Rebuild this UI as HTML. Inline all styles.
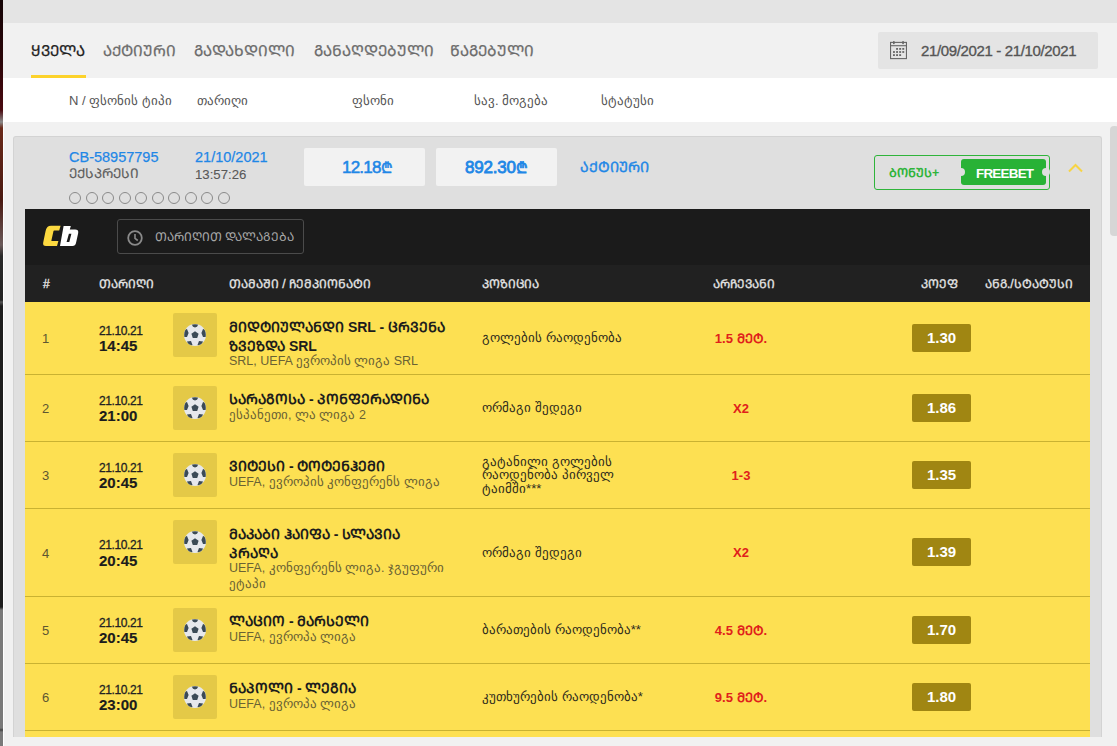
<!DOCTYPE html>
<html><head><meta charset="utf-8">
<style>
*{box-sizing:border-box;margin:0;padding:0}
html,body{width:1117px;height:746px;overflow:hidden}
body{position:relative;background:#f1f1f1;font-family:"Liberation Sans",sans-serif;color:#222}
.a{position:absolute;white-space:nowrap}
#strip{left:0;top:0;width:3px;height:746px;background:linear-gradient(#140406 0,#2a0508 60px,#4a0a10 110px,#8a8a8a 122px,#6a2a1a 128px,#4a1a12 200px,#6a5a5a 245px,#2a2a2a 256px,#222 300px,#555 302px,#1e1e1e 306px,#1e1e1e 607px,#7a7a7a 610px,#7a7a7a 728px,#444 730px,#7a7a7a 732px)}
#wline{left:3px;top:78px;width:1px;height:668px;background:#fff}
#topbar{left:3px;top:0;width:1114px;height:23px;background:#e4e4e4}
#tabbar{left:3px;top:23px;width:1114px;height:55px;background:#f1f1f1}
#hdr{left:3px;top:78px;width:1114px;height:44px;background:#fff}
.tab{top:37.6px;font-size:15.2px;line-height:26px;color:#6c6c6c;-webkit-text-stroke:0.25px #6c6c6c}
.tab.on{-webkit-text-stroke:0.25px #222}
.tab.on{color:#222}
#uline{left:31px;top:75px;width:55px;height:3px;background:#fcd22b}
.hc{top:92px;font-size:13px;line-height:18px;color:#555}
#daterange{left:878px;top:32px;width:220px;height:37px;background:#e4e4e4;border-radius:2px}
#dtxt{left:921px;top:41px;font-size:15px;letter-spacing:-0.36px;line-height:20px;color:#555;-webkit-text-stroke:0.35px #555}
#thumb{left:1110px;top:126px;width:9px;height:110px;background:#d6d6d6;border-radius:4px}
#card{left:13px;top:136px;width:1089px;height:601px;background:#dfdfdf;border-radius:3px 3px 0 0;border:1px solid #d3d3d3;border-bottom:none}

.blue{color:#1f87e6}
.ct{font-size:14.5px;line-height:15px}
.amt{top:148px;width:121px;height:38px;background:#f2f2f2;border-radius:2px}
.amtt{font-size:17px;line-height:17px;color:#1f87e6}
.circ{top:191.5px;width:12px;height:12px;border:1px solid #8a8a8a;border-radius:50%}
#bonus{left:874px;top:155px;width:176px;height:35px;border:1px solid #2fb43b;border-radius:3px}
#fb{left:961px;top:159px;width:85px;height:26px;background:#28b236;border-radius:3px}
.notch{width:8px;height:8px;border-radius:50%;background:#dfdfdf;top:9px}
#blk{left:25px;top:209px;width:1065px;height:56px;background:#1b1b1b}
#thead{left:25px;top:265px;width:1065px;height:37px;background:#212121}
#search{left:117px;top:219px;width:187px;height:35px;border:1px solid #4b4b4b;border-radius:3px}
.th{top:277px;font-size:12.1px;line-height:14px;color:#e6e6e6;-webkit-text-stroke:0.3px #e6e6e6}
</style><style>
.row{left:25px;width:1065px;background:#fde052}
.sep{left:25px;width:1065px;height:1px;background:#c9b232}
.num{font-size:13px;line-height:13px;color:#5e5631}
.dt{font-size:12px;line-height:12px;letter-spacing:-0.4px;color:#222;-webkit-text-stroke:0.3px #222}
.tm{font-size:15px;line-height:14px;color:#1c1c1c;font-weight:bold;-webkit-text-stroke:0.15px #1c1c1c}
.ib{left:173px;width:44px;height:44px;background:#e4c947;border-radius:2px}
.ttl{left:229px;font-size:14px;line-height:14px;font-weight:bold;color:#1c1c1c}
.sub{left:229px;font-size:12.5px;line-height:13px;color:#6a6234}
.pos{left:482px;font-size:13.2px;line-height:13.3px;color:#2e2b1c}
.ch{left:700px;width:82px;text-align:center;font-size:13px;line-height:13px;font-weight:bold;color:#e0201b}
.odb{left:912px;width:59px;height:28px;background:#a08612;border-radius:2px;color:#fff;font-weight:bold;font-size:15px;line-height:28px;text-align:center}
</style></head><body>
<div class="a" id="strip"></div>
<div class="a" id="topbar"></div>
<div class="a" id="tabbar"></div>
<div class="a" id="hdr"></div>
<div class="a" id="wline"></div>
<div class="a tab on" style="left: 31px; width: 56px; clip-path: inset(-12px -1px -12px -6px);">ᲧᲕᲔᲚᲐ</div>
<div class="a tab" style="left: 103px; width: 75px; clip-path: inset(-12px -1px -12px -6px);">ᲐᲥᲢᲘᲣᲠᲘ</div>
<div class="a tab" style="left: 194px; width: 103px; clip-path: inset(-12px -1px -12px -6px);">ᲒᲐᲓᲐᲮᲓᲘᲚᲘ</div>
<div class="a tab" style="left: 314px; width: 122px; clip-path: inset(-12px -1px -12px -6px);">ᲒᲐᲜᲐᲦᲓᲔᲑᲣᲚᲘ</div>
<div class="a tab" style="left: 450px; width: 86px; clip-path: inset(-12px -1px -12px -6px);">ᲬᲐᲒᲔᲑᲣᲚᲘ</div>
<div class="a" id="uline"></div>
<div class="a" id="daterange"></div>
<svg class="a" style="left:890px;top:41px" width="18" height="19" viewBox="0 0 18 19"><g fill="none" stroke="#666" stroke-width="1.1"><rect x="0.55" y="1.4" width="15.9" height="16.2"></rect><line x1="0.5" y1="4.7" x2="16.5" y2="4.7"></line></g><g fill="#666"><rect x="3" y="0" width="1.7" height="3.2" rx="0.8"></rect><rect x="12.2" y="0" width="1.7" height="3.2" rx="0.8"></rect><rect x="6.1" y="7" width="1.9" height="1.8"></rect><rect x="9.2" y="7" width="1.9" height="1.8"></rect><rect x="12.3" y="7" width="1.9" height="1.8"></rect><rect x="3" y="10.1" width="1.9" height="1.8"></rect><rect x="6.1" y="10.1" width="1.9" height="1.8"></rect><rect x="9.2" y="10.1" width="1.9" height="1.8"></rect><rect x="12.3" y="10.1" width="1.9" height="1.8"></rect><rect x="3" y="13.2" width="1.9" height="1.8"></rect><rect x="6.1" y="13.2" width="1.9" height="1.8"></rect><rect x="9.2" y="13.2" width="1.9" height="1.8"></rect></g></svg>
<div class="a" id="dtxt">21/09/2021 - 21/10/2021</div>
<div class="a hc" style="left: 69px; width: 105px; clip-path: inset(-12px -1px -12px -6px);">N / ფსონის ტიპი</div>
<div class="a hc" style="left: 197px; width: 53px; clip-path: inset(-12px -1px -12px -6px);">თარიღი</div>
<div class="a hc" style="left: 352px; width: 44px; clip-path: inset(-12px -1px -12px -6px);">ფსონი</div>
<div class="a hc" style="left: 474px; width: 77px; clip-path: inset(-12px -1px -12px -6px);">სავ. მოგება</div>
<div class="a hc" style="left: 601px; width: 55px; clip-path: inset(-12px -1px -12px -6px);">სტატუსი</div>
<div class="a" id="thumb"></div>
<div class="a" id="card"></div>

<div class="a ct blue" style="left:69px;top:150px;-webkit-text-stroke:0.25px #1f87e6">CB-58957795</div>
<div class="a ct" style="left: 69px; top: 166px; color: rgb(94, 94, 94); font-size: 13.5px; -webkit-text-stroke: 0.15px rgb(94, 94, 94); width: 72px; clip-path: inset(-12px -1px -12px -6px);">ᲔᲥᲡᲞᲠᲔᲡᲘ</div>
<div class="a ct blue" style="left:195px;top:150px;-webkit-text-stroke:0.25px #1f87e6">21/10/2021</div>
<div class="a ct" style="left:195px;top:166.5px;color:#595959;font-size:13.2px;-webkit-text-stroke:0.1px #595959">13:57:26</div>
<div class="a circ" style="left:69px"></div>
<div class="a circ" style="left:85.5px"></div>
<div class="a circ" style="left:102px"></div>
<div class="a circ" style="left:118.5px"></div>
<div class="a circ" style="left:135px"></div>
<div class="a circ" style="left:151.5px"></div>
<div class="a circ" style="left:168px"></div>
<div class="a circ" style="left:184.5px"></div>
<div class="a circ" style="left:201px"></div>
<div class="a circ" style="left:217.5px"></div>
<div class="a amt" style="left:304px"></div>
<div class="a amt" style="left:436px"></div>
<div class="a amtt" style="left:342px;top:159px;letter-spacing:-0.8px;-webkit-text-stroke:0.55px #1f87e6">12.18<span style="font-size:15px">₾</span></div>
<div class="a amtt" style="left:465px;top:159px;letter-spacing:-0.2px;-webkit-text-stroke:0.8px #1f87e6">892.30<span style="font-size:15px">₾</span></div>
<div class="a blue" style="left: 580px; top: 158.5px; font-size: 14.4px; line-height: 17px; -webkit-text-stroke: 0.4px rgb(31, 135, 230); width: 71px; clip-path: inset(-12px -1px -12px -6px);">ᲐᲥᲢᲘᲣᲠᲘ</div>
<div class="a" id="bonus"></div>
<div class="a" id="fb"><div class="a notch" style="left:-4px"></div><div class="a notch" style="left:81px"></div></div>
<div class="a" style="left: 889px; top: 165.5px; font-size: 12.4px; line-height: 15px; color: rgb(47, 180, 59); font-weight: bold; width: 53px; clip-path: inset(-12px -1px -12px -6px);">ᲑᲝᲜᲣᲡ+</div>
<div class="a" style="left:976px;top:165.5px;font-size:13.4px;line-height:15px;color:#fff;font-weight:bold;letter-spacing:-0.75px">FREEBET</div>
<svg class="a" style="left:1068px;top:163px" width="15" height="10" viewBox="0 0 15 10"><polyline points="1,8.5 7.5,2 14,8.5" fill="none" stroke="#f7d444" stroke-width="2"></polyline></svg>
<div class="a" id="blk"></div>
<div class="a" id="thead"></div>
<svg class="a" style="left:36px;top:220px" width="50" height="32" viewBox="0 0 50 32"><path fill="#fcd940" d="M15 5.8L24.6 5.8L23.2 10.5L18.2 10.5Q17.6 10.5 17.5 11L15.4 20.4Q15.3 21 16 21L22.4 21L21 26L10 26Q6.5 26 7.2 22.5L9.6 11Q10.6 5.8 15 5.8Z"></path><path fill="#fff" fill-rule="evenodd" d="M27.6 6L34.8 6L33.8 9.6L39 9.6Q42.8 9.6 42.2 13L40 23Q39.4 26 36.5 26L24 26ZM32.9 13.8L35.4 13.8L33.3 22L30.6 22Z"></path></svg>
<div class="a" id="search"></div>
<svg class="a" style="left:127px;top:230px" width="16" height="16" viewBox="0 0 16 16"><circle cx="8" cy="8" r="6.8" fill="none" stroke="#8a8a8a" stroke-width="1.8"></circle><polyline points="8,4 8,8.3 10.8,10.5" fill="none" stroke="#8a8a8a" stroke-width="1.6"></polyline></svg>
<div class="a" style="left: 155px; top: 230px; font-size: 12.2px; line-height: 15px; color: rgb(169, 169, 169); width: 142px; clip-path: inset(-12px -1px -12px -6px);">ᲗᲐᲠᲘᲦᲘᲗ ᲓᲐᲚᲐᲒᲔᲑᲐ</div>
<div class="a th" style="left:43px">#</div>
<div class="a th" style="left: 99px; width: 57px; clip-path: inset(-12px -1px -12px -6px);">ᲗᲐᲠᲘᲦᲘ</div>
<div class="a th" style="left: 229px; width: 145px; clip-path: inset(-12px -1px -12px -6px);">ᲗᲐᲛᲐᲨᲘ / ᲩᲔᲛᲞᲘᲝᲜᲐᲢᲘ</div>
<div class="a th" style="left: 482px; width: 59px; clip-path: inset(-12px -1px -12px -6px);">ᲞᲝᲖᲘᲪᲘᲐ</div>
<div class="a th" style="left: 713px; width: 64px; clip-path: inset(-12px -1px -12px -6px);">ᲐᲠᲩᲔᲕᲐᲜᲘ</div>
<div class="a th" style="left: 921px; width: 39px; clip-path: inset(-12px -1px -12px -6px);">ᲙᲝᲔᲤ</div>
<div class="a th" style="left: 985px; width: 90px; clip-path: inset(-12px -1px -12px -6px);">ᲐᲜᲒ./ᲡᲢᲐᲢᲣᲡᲘ</div>
<div class="a row" style="top:302px;height:72px"></div>
<div class="a sep" style="top:374px"></div>
<div class="a num" style="left:42px;top:332.0px">1</div>
<div class="a dt" style="left:99px;top:324.8px">21.10.21</div>
<div class="a tm" style="left:99px;top:339.1px">14:45</div>
<div class="a ib" style="top:313px"><svg class="a" style="left:11px;top:11px" width="22" height="22" viewBox="0 0 22 22"><defs><clipPath id="bc"><circle cx="11" cy="11" r="10.8"></circle></clipPath></defs><circle cx="11" cy="11" r="11" fill="#e6e8ec"></circle><g fill="#3b4a56" clip-path="url(#bc)"><polygon points="11,7.2 14.6,9.8 13.2,14 8.8,14 7.4,9.8"></polygon><polygon points="7.5,0 14.5,0 13,2.8 11,3.6 9,2.8"></polygon><polygon points="0,6 3,5 4.6,9 3,13 0,13"></polygon><polygon points="22,6 19,5 17.4,9 19,13 22,13"></polygon><polygon points="3,17.5 7,17 8.5,21 5,23"></polygon><polygon points="19,17.5 15,17 13.5,21 17,23"></polygon></g></svg></div>
<div class="a ttl" style="top: 320.1px; width: 219px; clip-path: inset(-12px -1px -12px -6px);">ᲛᲘᲓᲢᲘᲣᲚᲐᲜᲓᲘ SRL - ᲪᲠᲕᲔᲜᲐ</div>
<div class="a ttl" style="top: 338.6px; width: 90px; clip-path: inset(-12px -1px -12px -6px);">ᲖᲕᲔᲖᲓᲐ SRL</div>
<div class="a sub" style="top: 355.4px; width: 191px; clip-path: inset(-12px -1px -12px -6px);">SRL, UEFA ევროპის ლიგა SRL</div>
<div class="a pos" style="top: 331.4px; width: 142px; clip-path: inset(-12px -1px -12px -6px);">გოლების რაოდენობა</div>
<div class="a ch" style="top:331.5px">1.5 ᲛᲔᲢ.</div>
<div class="a odb" style="top:324px">1.30</div>
<div class="a row" style="top:375px;height:66px"></div>
<div class="a sep" style="top:441px"></div>
<div class="a num" style="left:42px;top:402.0px">2</div>
<div class="a dt" style="left:99px;top:394.8px">21.10.21</div>
<div class="a tm" style="left:99px;top:409.1px">21:00</div>
<div class="a ib" style="top:386px"><svg class="a" style="left:11px;top:11px" width="22" height="22" viewBox="0 0 22 22"><defs><clipPath id="bc"><circle cx="11" cy="11" r="10.8"></circle></clipPath></defs><circle cx="11" cy="11" r="11" fill="#e6e8ec"></circle><g fill="#3b4a56" clip-path="url(#bc)"><polygon points="11,7.2 14.6,9.8 13.2,14 8.8,14 7.4,9.8"></polygon><polygon points="7.5,0 14.5,0 13,2.8 11,3.6 9,2.8"></polygon><polygon points="0,6 3,5 4.6,9 3,13 0,13"></polygon><polygon points="22,6 19,5 17.4,9 19,13 22,13"></polygon><polygon points="3,17.5 7,17 8.5,21 5,23"></polygon><polygon points="19,17.5 15,17 13.5,21 17,23"></polygon></g></svg></div>
<div class="a ttl" style="top: 391.8px; width: 203px; clip-path: inset(-12px -1px -12px -6px);">ᲡᲐᲠᲐᲒᲝᲡᲐ - ᲞᲝᲜᲤᲔᲠᲐᲓᲘᲜᲐ</div>
<div class="a sub" style="top: 408.7px; width: 139px; clip-path: inset(-12px -1px -12px -6px);">ესპანეთი, ლა ლიგა 2</div>
<div class="a pos" style="top: 401.4px; width: 102px; clip-path: inset(-12px -1px -12px -6px);">ორმაგი შედეგი</div>
<div class="a ch" style="top:401.5px">X2</div>
<div class="a odb" style="top:394px">1.86</div>
<div class="a row" style="top:442px;height:66px"></div>
<div class="a sep" style="top:508px"></div>
<div class="a num" style="left:42px;top:469.0px">3</div>
<div class="a dt" style="left:99px;top:461.8px">21.10.21</div>
<div class="a tm" style="left:99px;top:476.1px">20:45</div>
<div class="a ib" style="top:453px"><svg class="a" style="left:11px;top:11px" width="22" height="22" viewBox="0 0 22 22"><defs><clipPath id="bc"><circle cx="11" cy="11" r="10.8"></circle></clipPath></defs><circle cx="11" cy="11" r="11" fill="#e6e8ec"></circle><g fill="#3b4a56" clip-path="url(#bc)"><polygon points="11,7.2 14.6,9.8 13.2,14 8.8,14 7.4,9.8"></polygon><polygon points="7.5,0 14.5,0 13,2.8 11,3.6 9,2.8"></polygon><polygon points="0,6 3,5 4.6,9 3,13 0,13"></polygon><polygon points="22,6 19,5 17.4,9 19,13 22,13"></polygon><polygon points="3,17.5 7,17 8.5,21 5,23"></polygon><polygon points="19,17.5 15,17 13.5,21 17,23"></polygon></g></svg></div>
<div class="a ttl" style="top: 458.8px; width: 159px; clip-path: inset(-12px -1px -12px -6px);">ᲕᲘᲢᲔᲡᲘ - ᲢᲝᲢᲔᲜᲰᲔᲛᲘ</div>
<div class="a sub" style="top: 475.7px; width: 213px; clip-path: inset(-12px -1px -12px -6px);">UEFA, ევროპის კონფერენს ლიგა</div>
<div class="a pos" style="top: 455.1px; width: 132px; clip-path: inset(-12px -1px -12px -6px);">გატანილი გოლების</div>
<div class="a pos" style="top: 468.4px; width: 134px; clip-path: inset(-12px -1px -12px -6px);">რაოდენობა პირველ</div>
<div class="a pos" style="top: 481.7px; width: 62px; clip-path: inset(-12px -1px -12px -6px);">ტაიმში***</div>
<div class="a ch" style="top:468.5px">1-3</div>
<div class="a odb" style="top:461px">1.35</div>
<div class="a row" style="top:509px;height:87px"></div>
<div class="a sep" style="top:596px"></div>
<div class="a num" style="left:42px;top:546.5px">4</div>
<div class="a dt" style="left:99px;top:539.3px">21.10.21</div>
<div class="a tm" style="left:99px;top:553.6px">20:45</div>
<div class="a ib" style="top:520px"><svg class="a" style="left:11px;top:11px" width="22" height="22" viewBox="0 0 22 22"><defs><clipPath id="bc"><circle cx="11" cy="11" r="10.8"></circle></clipPath></defs><circle cx="11" cy="11" r="11" fill="#e6e8ec"></circle><g fill="#3b4a56" clip-path="url(#bc)"><polygon points="11,7.2 14.6,9.8 13.2,14 8.8,14 7.4,9.8"></polygon><polygon points="7.5,0 14.5,0 13,2.8 11,3.6 9,2.8"></polygon><polygon points="0,6 3,5 4.6,9 3,13 0,13"></polygon><polygon points="22,6 19,5 17.4,9 19,13 22,13"></polygon><polygon points="3,17.5 7,17 8.5,21 5,23"></polygon><polygon points="19,17.5 15,17 13.5,21 17,23"></polygon></g></svg></div>
<div class="a ttl" style="top: 527.1px; width: 174px; clip-path: inset(-12px -1px -12px -6px);">ᲛᲐᲙᲐᲑᲘ ᲰᲐᲘᲤᲐ - ᲡᲚᲐᲕᲘᲐ</div>
<div class="a ttl" style="top: 545.6px; width: 51px; clip-path: inset(-12px -1px -12px -6px);">ᲞᲠᲐᲦᲐ</div>
<div class="a sub" style="top: 562.4px; width: 218px; clip-path: inset(-12px -1px -12px -6px);">UEFA, კონფერენს ლიგა. ჯგუფური</div>
<div class="a sub" style="top: 577.9px; width: 39px; clip-path: inset(-12px -1px -12px -6px);">ეტაპი</div>
<div class="a pos" style="top: 545.9px; width: 102px; clip-path: inset(-12px -1px -12px -6px);">ორმაგი შედეგი</div>
<div class="a ch" style="top:546.0px">X2</div>
<div class="a odb" style="top:538px">1.39</div>
<div class="a row" style="top:597px;height:66px"></div>
<div class="a sep" style="top:663px"></div>
<div class="a num" style="left:42px;top:624.0px">5</div>
<div class="a dt" style="left:99px;top:616.8px">21.10.21</div>
<div class="a tm" style="left:99px;top:631.1px">20:45</div>
<div class="a ib" style="top:608px"><svg class="a" style="left:11px;top:11px" width="22" height="22" viewBox="0 0 22 22"><defs><clipPath id="bc"><circle cx="11" cy="11" r="10.8"></circle></clipPath></defs><circle cx="11" cy="11" r="11" fill="#e6e8ec"></circle><g fill="#3b4a56" clip-path="url(#bc)"><polygon points="11,7.2 14.6,9.8 13.2,14 8.8,14 7.4,9.8"></polygon><polygon points="7.5,0 14.5,0 13,2.8 11,3.6 9,2.8"></polygon><polygon points="0,6 3,5 4.6,9 3,13 0,13"></polygon><polygon points="22,6 19,5 17.4,9 19,13 22,13"></polygon><polygon points="3,17.5 7,17 8.5,21 5,23"></polygon><polygon points="19,17.5 15,17 13.5,21 17,23"></polygon></g></svg></div>
<div class="a ttl" style="top: 613.8px; width: 143px; clip-path: inset(-12px -1px -12px -6px);">ᲚᲐᲪᲘᲝ - ᲛᲐᲠᲡᲔᲚᲘ</div>
<div class="a sub" style="top: 630.7px; width: 130px; clip-path: inset(-12px -1px -12px -6px);">UEFA, ევროპა ლიგა</div>
<div class="a pos" style="top: 623.4px; width: 161px; clip-path: inset(-12px -1px -12px -6px);">ბარათების რაოდენობა**</div>
<div class="a ch" style="top:623.5px">4.5 ᲛᲔᲢ.</div>
<div class="a odb" style="top:616px">1.70</div>
<div class="a row" style="top:664px;height:66px"></div>
<div class="a sep" style="top:730px"></div>
<div class="a num" style="left:42px;top:691.0px">6</div>
<div class="a dt" style="left:99px;top:683.8px">21.10.21</div>
<div class="a tm" style="left:99px;top:698.1px">23:00</div>
<div class="a ib" style="top:675px"><svg class="a" style="left:11px;top:11px" width="22" height="22" viewBox="0 0 22 22"><defs><clipPath id="bc"><circle cx="11" cy="11" r="10.8"></circle></clipPath></defs><circle cx="11" cy="11" r="11" fill="#e6e8ec"></circle><g fill="#3b4a56" clip-path="url(#bc)"><polygon points="11,7.2 14.6,9.8 13.2,14 8.8,14 7.4,9.8"></polygon><polygon points="7.5,0 14.5,0 13,2.8 11,3.6 9,2.8"></polygon><polygon points="0,6 3,5 4.6,9 3,13 0,13"></polygon><polygon points="22,6 19,5 17.4,9 19,13 22,13"></polygon><polygon points="3,17.5 7,17 8.5,21 5,23"></polygon><polygon points="19,17.5 15,17 13.5,21 17,23"></polygon></g></svg></div>
<div class="a ttl" style="top: 680.8px; width: 130px; clip-path: inset(-12px -1px -12px -6px);">ᲜᲐᲞᲝᲚᲘ - ᲚᲔᲒᲘᲐ</div>
<div class="a sub" style="top: 697.7px; width: 130px; clip-path: inset(-12px -1px -12px -6px);">UEFA, ევროპა ლიგა</div>
<div class="a pos" style="top: 690.4px; width: 163px; clip-path: inset(-12px -1px -12px -6px);">კუთხურების რაოდენობა*</div>
<div class="a ch" style="top:690.5px">9.5 ᲛᲔᲢ.</div>
<div class="a odb" style="top:683px">1.80</div>
<div class="a row" style="top:731px;height:6px"></div>

</body></html>
